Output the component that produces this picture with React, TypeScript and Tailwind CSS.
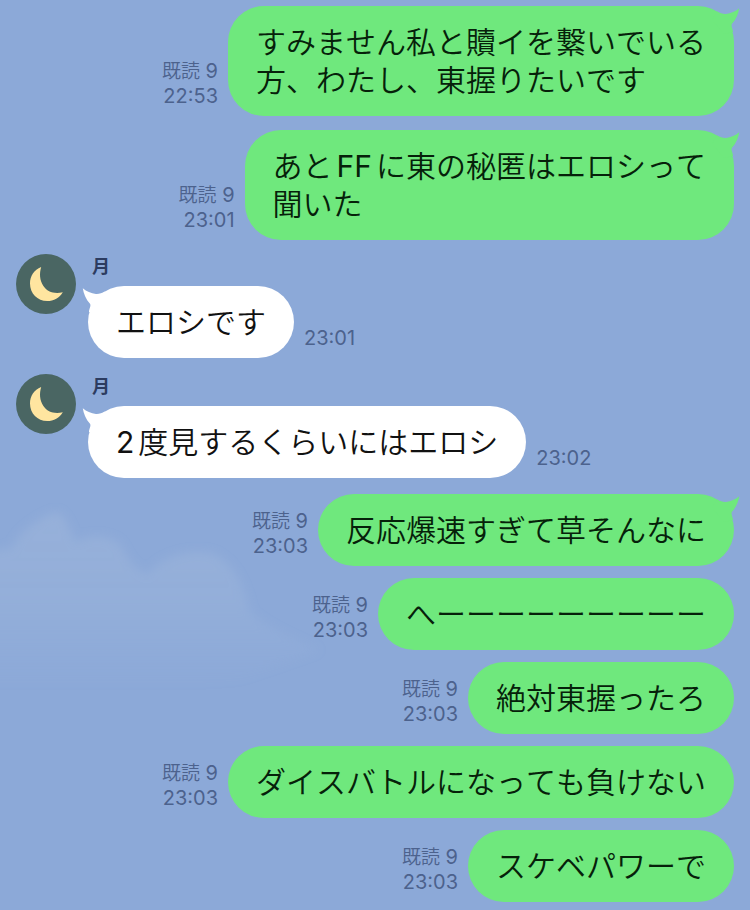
import type { ReactNode } from "react";
import clsx from "clsx";

type Message = {
  id: number;
  mine: boolean;
  body: ReactNode;
  time: string;
  readCount?: number;
  sender?: string;
  tail?: boolean;
  spacing: string;
};

/** Latin letters and digits get a little air next to kana and kanji. */
function Latin({ className, children }: { className: string; children: ReactNode }) {
  return <span className={clsx("font-normal", className)}>{children}</span>;
}

const MESSAGES: Message[] = [
  {
    id: 1,
    mine: true,
    tail: true,
    readCount: 9,
    time: "22:53",
    spacing: "mt-0",
    body: "すみません私と贖イを繋いでいる\n方、わたし、東握りたいです",
  },
  {
    id: 2,
    mine: true,
    tail: true,
    readCount: 9,
    time: "23:01",
    spacing: "mt-3.5",
    body: (
      <>
        あと<Latin className="mx-1">FF</Latin>に東の秘匿はエロシって{"\n"}聞いた
      </>
    ),
  },
  { id: 3, mine: false, sender: "月", time: "23:01", spacing: "mt-3.5", body: "エロシです" },
  {
    id: 4,
    mine: false,
    sender: "月",
    time: "23:02",
    spacing: "mt-4",
    body: (
      <>
        <Latin className="mr-1">2</Latin>度見するくらいにはエロシ
      </>
    ),
  },
  {
    id: 5,
    mine: true,
    tail: true,
    readCount: 9,
    time: "23:03",
    spacing: "mt-4",
    body: "反応爆速すぎて草そんなに",
  },
  { id: 6, mine: true, readCount: 9, time: "23:03", spacing: "mt-3", body: "へーーーーーーーーー" },
  { id: 7, mine: true, readCount: 9, time: "23:03", spacing: "mt-3", body: "絶対東握ったろ" },
  { id: 8, mine: true, readCount: 9, time: "23:03", spacing: "mt-3", body: "ダイスバトルになっても負けない" },
  { id: 9, mine: true, readCount: 9, time: "23:03", spacing: "mt-3", body: "スケベパワーで" },
];

function Tail({ mine }: { mine: boolean }) {
  return (
    <svg
      viewBox="0 0 30 30"
      aria-hidden="true"
      className={clsx(
        "absolute top-0 size-[30px]",
        mine ? "-right-1.5 -scale-x-100 text-[#6fe87d]" : "-left-1.5 text-white",
      )}
    >
      <path
        fill="currentColor"
        d="M0.8 2.3C4.5 5.4 9 7.6 14 8C17 8.2 20 7.2 23 5.6L28 14L16 28L7 26C7 23 9.4 20 8 17.8C3.8 13.2 1.6 7.6 0.8 2.3Z"
      />
    </svg>
  );
}

function Bubble({ mine, tail, children }: { mine: boolean; tail?: boolean; children: ReactNode }) {
  return (
    <div
      className={clsx(
        "relative rounded-[36px] px-7 py-[17px]",
        mine ? "bg-[#6fe87d] text-[#06210a]" : "bg-white text-[#111111]",
      )}
    >
      {tail && <Tail mine={mine} />}
      <p className="relative whitespace-pre-wrap text-[30px] font-[350] leading-[38px]">
        {children}
      </p>
    </div>
  );
}

function Meta({ time, readCount }: { time: string; readCount?: number }) {
  return (
    <div className="shrink-0 pb-2 text-right text-[20px] leading-6 text-[#4c628d]">
      {readCount !== undefined && (
        <p className="whitespace-nowrap">
          <span className="text-[19px] font-[350]">既読</span> {readCount}
        </p>
      )}
      <time>{time}</time>
    </div>
  );
}

function Avatar() {
  return (
    <svg viewBox="0 0 60 60" aria-hidden="true" className="size-[60px] shrink-0">
      <circle cx="30" cy="30" r="30" fill="#4a6663" />
      <path
        fill="#ffe5a0"
        d="M25.2 13C18 15.8 14 22 14 29.5C14 39.5 21.5 47 31.2 47C37.8 47 43.6 43.8 46.8 38.2C38.5 40.4 31.2 37.8 27.4 32C23.6 26.2 23.2 19.6 25.2 13Z"
      />
    </svg>
  );
}

/** Faint cloud bank of the chat wallpaper. */
function Clouds() {
  return (
    <svg
      viewBox="0 0 330 220"
      aria-hidden="true"
      className="pointer-events-none absolute left-0 top-[490px] w-[330px]"
    >
      <defs>
        <linearGradient id="cloud" x1="0" y1="0" x2="0" y2="1">
          <stop offset="0" stopColor="#a5bbdc" stopOpacity="0.4" />
          <stop offset="0.5" stopColor="#a0b8dc" stopOpacity="0.36" />
          <stop offset="0.95" stopColor="#9ab4dc" stopOpacity="0" />
        </linearGradient>
        <filter id="soft" x="-10%" y="-10%" width="120%" height="120%">
          <feGaussianBlur stdDeviation="5" />
        </filter>
      </defs>
      <path
        fill="url(#cloud)"
        filter="url(#soft)"
        d="M-20 62L12 58C18 44 34 30 56 22C68 26 68 40 76 52C88 44 108 44 120 54C126 66 134 80 148 84C162 66 190 58 214 64C236 76 244 96 250 122C270 140 300 150 320 160L240 190L120 205L-20 205Z"
      />
    </svg>
  );
}

export default function App() {
  return (
    <main
      lang="ja"
      className="relative min-h-screen overflow-hidden bg-[#8ca9d8] px-4 pb-2 pt-1.5 font-['Inter','Noto_Sans_CJK_JP',sans-serif] [font-kerning:none]"
    >
      <Clouds />
      <ol className="relative flex flex-col">
        {MESSAGES.map((m) =>
          m.mine ? (
            <li key={m.id} className={clsx("flex items-end justify-end gap-2.5", m.spacing)}>
              <Meta time={m.time} readCount={m.readCount} />
              <Bubble mine tail={m.tail}>
                {m.body}
              </Bubble>
            </li>
          ) : (
            <li key={m.id} className={clsx("flex items-start gap-3", m.spacing)}>
              <Avatar />
              <div>
                <p className="mb-1.5 pl-1 text-[18px] font-bold leading-[26px] text-[#2c3c60]">
                  {m.sender}
                </p>
                <div className="flex items-end gap-2.5">
                  <Bubble mine={false} tail>
                    {m.body}
                  </Bubble>
                  <Meta time={m.time} />
                </div>
              </div>
            </li>
          ),
        )}
      </ol>
    </main>
  );
}
